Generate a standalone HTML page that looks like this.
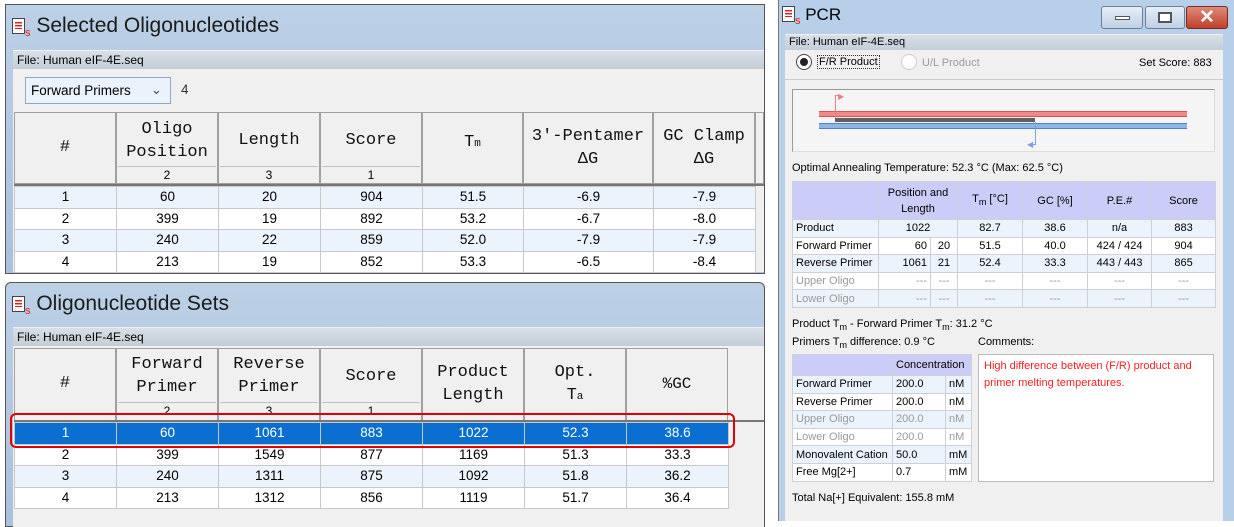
<!DOCTYPE html>
<html><head><meta charset="utf-8"><style>
*{box-sizing:border-box;margin:0;padding:0}
body{width:1234px;height:521px;position:relative;overflow:hidden;background:#fff;font-family:"Liberation Sans",Arial,sans-serif;font-size:13px;color:#000}
.a{position:absolute}
.win{background:linear-gradient(#bcd0e6,#a9c1dc);border:1px solid #555}
.ttl{font-size:21px;color:#1b1b1b}
.icon{display:inline-block;width:13px;height:16px;border:1.5px solid #444;background:#fff;position:relative;vertical-align:-2px}
.icon:before{content:"";position:absolute;left:2px;top:3px;width:7px;height:7px;background:repeating-linear-gradient(#e02020 0 1.5px,#fff 1.5px 3px)}
.s{color:#e02020;font-size:11px;vertical-align:-4px}
.file{background:linear-gradient(#d9e0e6,#c3ced6);font-size:12px;padding-left:4px;line-height:18px}
table{border-collapse:collapse;table-layout:fixed}
.g td{border:1px solid #c8c8c8;text-align:center;font-size:13.5px;height:21.6px;padding:0;line-height:20px}
.g tr.e td{background:#ebf3fd}
.hd{position:absolute;background:#f0f0f0;border:1px solid #a0a0a0;font-family:"Liberation Mono",monospace;font-size:17px;text-align:center;line-height:23px;color:#111}
.sr{position:absolute;border-top:1px solid #c0c0c0;font-size:12px;text-align:center;line-height:16px}
.p td{border:1px solid #cfcfd8;font-size:11px;height:17.6px;padding:0 3px;line-height:16px}
.gray{color:#9a9a9a}
.btn{position:absolute;top:6px;height:23px;border:1px solid #6d7f95;border-radius:3px;background:linear-gradient(#e6eef8,#c0d0e4)}
</style></head><body>

<!-- top window -->
<div class="a win" style="left:5px;top:4px;width:760px;height:270px"></div>
<div class="a ttl" style="left:12px;top:14px"><span class="icon"></span><span class="s">s</span> Selected Oligonucleotides</div>
<div class="a" style="left:13px;top:50px;width:751px;height:222px;background:#f0f0f0"></div>
<div class="a file" style="left:13px;top:51px;width:751px">File: Human eIF-4E.seq</div>
<div class="a" style="left:25px;top:77px;width:146px;height:27px;border:1px solid #8fa8c8;background:#eaf2fb;font-size:13.5px;line-height:25px;padding-left:5px">Forward Primers <span style="position:absolute;right:8px;top:-1px;color:#555">&#8964;</span></div>
<div class="a" style="left:181px;top:82px;font-size:13.5px;color:#333">4</div>

<div class="hd" style="left:14px;top:112px;width:102px;height:72px;line-height:70px">#</div>
<div class="hd" style="left:116px;top:112px;width:102px;height:72px;padding-top:5px">Oligo<br>Position</div>
<div class="sr" style="left:118px;top:166px;width:98px">2</div>
<div class="hd" style="left:218px;top:112px;width:102px;height:72px;line-height:56px">Length</div>
<div class="sr" style="left:220px;top:166px;width:98px">3</div>
<div class="hd" style="left:320px;top:112px;width:102px;height:72px;line-height:56px">Score</div>
<div class="sr" style="left:322px;top:166px;width:98px">1</div>
<div class="hd" style="left:422px;top:112px;width:101px;height:72px;line-height:60px">T<span style="font-size:11px">m</span></div>
<div class="hd" style="left:523px;top:112px;width:130px;height:72px;padding-top:12px">3'-Pentamer<br>ΔG</div>
<div class="hd" style="left:653px;top:112px;width:102px;height:72px;padding-top:12px">GC Clamp<br>ΔG</div>
<div class="hd" style="left:755px;top:112px;width:9px;height:72px"></div>
<div class="a" style="left:14px;top:184px;width:750px;height:2px;background:#777"></div>
<table class="a g" style="left:14px;top:186px;width:741px;background:#fff">
<colgroup><col style="width:102px"><col style="width:102px"><col style="width:102px"><col style="width:102px"><col style="width:101px"><col style="width:130px"><col style="width:102px"></colgroup>
<tr class="e"><td>1</td><td>60</td><td>20</td><td>904</td><td>51.5</td><td>-6.9</td><td>-7.9</td></tr>
<tr><td>2</td><td>399</td><td>19</td><td>892</td><td>53.2</td><td>-6.7</td><td>-8.0</td></tr>
<tr class="e"><td>3</td><td>240</td><td>22</td><td>859</td><td>52.0</td><td>-7.9</td><td>-7.9</td></tr>
<tr><td>4</td><td>213</td><td>19</td><td>852</td><td>53.3</td><td>-6.5</td><td>-8.4</td></tr>
</table>

<!-- bottom window -->
<div class="a win" style="left:5px;top:282px;width:760px;height:245px;border-radius:6px 6px 0 0"></div>
<div class="a ttl" style="left:12px;top:292px"><span class="icon"></span><span class="s">s</span> Oligonucleotide Sets</div>
<div class="a" style="left:13px;top:327px;width:751px;height:200px;background:#f0f0f0"></div>
<div class="a file" style="left:13px;top:328px;width:751px">File: Human eIF-4E.seq</div>
<div class="hd" style="left:14px;top:348px;width:102px;height:74px;line-height:70px">#</div>
<div class="hd" style="left:116px;top:348px;width:102px;height:74px;padding-top:4px">Forward<br>Primer</div>
<div class="sr" style="left:118px;top:402px;width:98px">2</div>
<div class="hd" style="left:218px;top:348px;width:102px;height:74px;padding-top:4px">Reverse<br>Primer</div>
<div class="sr" style="left:220px;top:402px;width:98px">3</div>
<div class="hd" style="left:320px;top:348px;width:102px;height:74px;line-height:56px">Score</div>
<div class="sr" style="left:322px;top:402px;width:98px">1</div>
<div class="hd" style="left:422px;top:348px;width:102px;height:74px;padding-top:12px">Product<br>Length</div>
<div class="hd" style="left:524px;top:348px;width:102px;height:74px;padding-top:12px">Opt.<br>T<span style="font-size:11px">a</span></div>
<div class="hd" style="left:626px;top:348px;width:102px;height:74px;line-height:70px;font-size:16px">%GC</div>
<div class="a" style="left:14px;top:420px;width:750px;height:2px;background:#777"></div>
<table class="a g" style="left:14px;top:422px;width:714px;background:#fff">
<colgroup><col style="width:102px"><col style="width:102px"><col style="width:102px"><col style="width:102px"><col style="width:102px"><col style="width:102px"><col style="width:102px"></colgroup>
<tr style="color:#fff"><td style="background:#0a6fd0">1</td><td style="background:#0a6fd0">60</td><td style="background:#0a6fd0">1061</td><td style="background:#0a6fd0">883</td><td style="background:#0a6fd0">1022</td><td style="background:#0a6fd0">52.3</td><td style="background:#0a6fd0">38.6</td></tr>
<tr><td>2</td><td>399</td><td>1549</td><td>877</td><td>1169</td><td>51.3</td><td>33.3</td></tr>
<tr class="e"><td>3</td><td>240</td><td>1311</td><td>875</td><td>1092</td><td>51.8</td><td>36.2</td></tr>
<tr><td>4</td><td>213</td><td>1312</td><td>856</td><td>1119</td><td>51.7</td><td>36.4</td></tr>
</table>
<div class="a" style="left:10px;top:413px;width:725px;height:35px;border:2px solid #e00000;border-radius:6px"></div>

<!-- PCR window -->
<div class="a" style="left:778px;top:0;width:456px;height:521px;background:#b7cfe8;border-left:1px solid #777"></div>
<div class="a" style="left:782px;top:5px;font-size:17px"><span class="icon"></span><span class="s">s</span> PCR</div>
<div class="btn" style="left:1101px;width:42px"><div class="a" style="left:13px;top:9px;width:15px;height:4px;background:#fff;border:1px solid #555"></div></div>
<div class="btn" style="left:1145px;width:40px"><div class="a" style="left:12px;top:5px;width:14px;height:11px;border:2px solid #555;background:#fff"></div></div>
<div class="btn" style="left:1186px;width:42px;background:linear-gradient(#e08a78,#c0402a);border-color:#7a2a20;color:#fff;font-weight:bold;font-size:19px;text-align:center;line-height:21px">✕</div>
<div class="a" style="left:785px;top:34px;width:438px;height:487px;background:#f0f0f0"></div>
<div class="a file" style="left:785px;top:35px;width:438px;font-size:11px;line-height:15px">File: Human eIF-4E.seq</div>
<div class="a" style="left:796px;top:54px;width:16px;height:16px;border-radius:50%;border:1px solid #444;background:#fff"><div class="a" style="left:3px;top:3px;width:8px;height:8px;border-radius:50%;background:#222"></div></div>
<div class="a" style="left:817px;top:55px;font-size:11px;border:1px dotted #333;padding:0 1px">F/R Product</div>
<div class="a" style="left:901px;top:54px;width:16px;height:16px;border-radius:50%;border:1px solid #ccc;background:#fff"></div>
<div class="a gray" style="left:922px;top:57px;font-size:11px">U/L Product</div>
<div class="a" style="left:1139px;top:57px;font-size:11px">Set Score: 883</div>
<div class="a" style="left:785px;top:79px;width:438px;border-top:1px solid #ccc"></div>
<div class="a" style="left:792px;top:89px;width:423px;height:63px;border:1px solid #999;border-right-color:#ddd;border-bottom-color:#ddd;background:#f5f5f5"></div>
<div class="a" style="left:819px;top:111px;width:368px;height:6px;background:#f08a8a;border-top:1px solid #e05050;border-bottom:1px solid #e05050"></div>
<div class="a" style="left:835px;top:118px;width:200px;height:4px;background:#606060"></div>
<div class="a" style="left:819px;top:123px;width:368px;height:6px;background:#8fb4e6;border-top:1px solid #5080d0;border-bottom:1px solid #5080d0"></div>
<div class="a" style="left:835px;top:95px;width:1px;height:23px;background:#f08080"></div>
<div class="a" style="left:835px;top:95px;width:6px;height:1px;background:#f08080"></div>
<div class="a" style="left:838px;top:92px;color:#f08080;font-size:8px">▶</div>
<div class="a" style="left:1035px;top:122px;width:1px;height:22px;background:#7fa0d8"></div>
<div class="a" style="left:1030px;top:144px;width:6px;height:1px;background:#7fa0d8"></div>
<div class="a" style="left:1027px;top:140px;color:#7fa0d8;font-size:8px">◀</div>
<div class="a" style="left:792px;top:162px;font-size:11px">Optimal Annealing Temperature: 52.3 °C (Max: 62.5 °C)</div>

<table class="a p" style="left:792px;top:181px;width:423px;background:#fff;border:1px solid #999">
<colgroup><col style="width:86px"><col style="width:52px"><col style="width:27px"><col style="width:65px"><col style="width:65px"><col style="width:64px"><col style="width:64px"></colgroup>
<tr style="background:#ccccf8;text-align:center"><td style="height:38px"></td><td colspan="2" style="text-align:center">Position and<br>Length</td><td style="text-align:center">T<sub style="font-size:9px">m</sub> [°C]</td><td style="text-align:center">GC [%]</td><td style="text-align:center">P.E.#</td><td style="text-align:center">Score</td></tr>
<tr style="background:#ebf3fd;text-align:center"><td style="text-align:left">Product</td><td colspan="2">1022</td><td>82.7</td><td>38.6</td><td>n/a</td><td>883</td></tr>
<tr style="text-align:center"><td style="text-align:left">Forward Primer</td><td style="text-align:right">60</td><td>20</td><td>51.5</td><td>40.0</td><td>424 / 424</td><td>904</td></tr>
<tr style="background:#ebf3fd;text-align:center"><td style="text-align:left">Reverse Primer</td><td style="text-align:right">1061</td><td>21</td><td>52.4</td><td>33.3</td><td>443 / 443</td><td>865</td></tr>
<tr class="gray" style="text-align:center"><td style="text-align:left">Upper Oligo</td><td style="text-align:right">---</td><td>---</td><td>---</td><td>---</td><td>---</td><td>---</td></tr>
<tr class="gray" style="background:#ebf3fd;text-align:center"><td style="text-align:left">Lower Oligo</td><td style="text-align:right">---</td><td>---</td><td>---</td><td>---</td><td>---</td><td>---</td></tr>
</table>
<div class="a" style="left:792px;top:318px;font-size:11px">Product T<sub style="font-size:9px">m</sub> - Forward Primer T<sub style="font-size:9px">m</sub>: 31.2 °C</div>
<div class="a" style="left:792px;top:336px;font-size:11px">Primers T<sub style="font-size:9px">m</sub> difference: 0.9 °C</div>
<div class="a" style="left:978px;top:336px;font-size:11px">Comments:</div>
<table class="a p" style="left:792px;top:354px;width:179px;background:#fff;border:1px solid #999">
<colgroup><col style="width:100px"><col style="width:53px"><col style="width:26px"></colgroup>
<tr style="background:#ccccf8"><td></td><td colspan="2" style="height:21px">Concentration</td></tr>
<tr style="background:#ebf3fd"><td>Forward Primer</td><td>200.0</td><td>nM</td></tr>
<tr><td>Reverse Primer</td><td>200.0</td><td>nM</td></tr>
<tr class="gray" style="background:#ebf3fd"><td>Upper Oligo</td><td>200.0</td><td>nM</td></tr>
<tr class="gray"><td>Lower Oligo</td><td>200.0</td><td>nM</td></tr>
<tr style="background:#ebf3fd"><td>Monovalent Cation</td><td>50.0</td><td>mM</td></tr>
<tr><td>Free Mg[2+]</td><td>0.7</td><td>mM</td></tr>
</table>
<div class="a" style="left:978px;top:354px;width:236px;height:128px;border:1px solid #bbb;background:#fff;color:#ff2020;font-size:11px;line-height:17px;padding:3px 5px">High difference between (F/R) product and primer melting temperatures.</div>
<div class="a" style="left:792px;top:492px;font-size:11px">Total Na[+] Equivalent: 155.8 mM</div>
</body></html>
